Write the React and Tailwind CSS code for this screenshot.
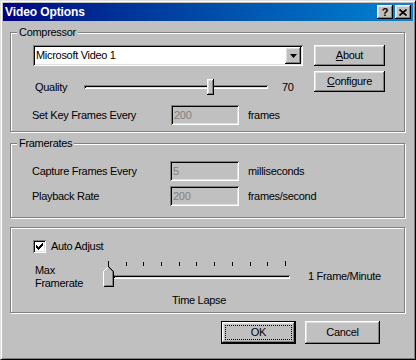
import React from "react";

const raised =
  "shadow-[inset_-1px_-1px_0_#000,inset_1px_1px_0_#fff,inset_-2px_-2px_0_#808080,inset_2px_2px_0_#dfdfdf]";
const sunken =
  "shadow-[inset_1px_1px_0_#808080,inset_-1px_-1px_0_#fff,inset_2px_2px_0_#000,inset_-2px_-2px_0_#dfdfdf]";

const GroupBox = ({ label, className, children }) => (
  <div
    className={`relative w-[395px] border border-[#808080] shadow-[inset_1px_1px_0_#fff,1px_1px_0_#fff] ${className}`}
  >
    {label && (
      <span className="absolute left-[6px] top-[-7px] bg-[#c0c0c0] px-[2px] leading-[13px]">
        {label}
      </span>
    )}
    {children}
  </div>
);

const Field = ({ value, className }) => (
  <div
    className={`flex h-[20px] items-center bg-[#c0c0c0] pl-[3px] text-[#808080] ${sunken} ${className}`}
  >
    {value}
  </div>
);

const Thumb = () => (
  <svg width="11" height="21" viewBox="0 0 11 21" shapeRendering="crispEdges">
    <polygon points="5.5,0.5 10.5,5.5 10.5,20.5 0.5,20.5 0.5,5.5" fill="#c0c0c0" />
    <polyline points="0.5,20 0.5,5.5 5.5,0.5" fill="none" stroke="#fff" />
    <polyline points="5.5,0.5 10.5,5.5 10.5,20.5 0.5,20.5" fill="none" stroke="#000" />
    <polyline points="5.5,1.5 9.5,5.5 9.5,19.5 1.5,19.5" fill="none" stroke="#808080" />
  </svg>
);

export default function App() {
  return (
    <div className="h-[360px] w-[416px] border border-t-[#dfdfdf] border-l-[#dfdfdf] border-r-black border-b-black bg-[#c0c0c0] p-[2px] font-['Liberation_Sans',Arial,sans-serif] text-[11px] leading-[13px] tracking-[-0.3px] text-black shadow-[inset_1px_1px_0_#fff,inset_-1px_-1px_0_#808080]">
      {/* title bar */}
      <div className="flex h-[18px] items-center bg-linear-to-r from-[#000080] to-[#1084d0] px-[2px]">
        <span className="flex-1 text-[12px] font-bold tracking-[-0.1px] text-white">Video Options</span>
        <button className={`flex h-[14px] w-[16px] items-center justify-center bg-[#c0c0c0] text-[11px] font-bold leading-none ${raised}`}>
          ?
        </button>
        <button className={`ml-[2px] flex h-[14px] w-[16px] items-center justify-center bg-[#c0c0c0] ${raised}`}>
          <svg width="8" height="7" viewBox="0 0 8 7">
            <path d="M0.5 0.5 L7.5 6.5 M7.5 0.5 L0.5 6.5" stroke="#000" strokeWidth="1.7" />
          </svg>
        </button>
      </div>

      <div className="flex flex-col pl-[7px]">
        {/* Compressor */}
        <GroupBox label="Compressor" className="mt-[11px] flex h-[100px] pl-[21px] pt-[12px]">
          <div className="flex w-[271px] flex-col">
            <div className={`ml-[1px] flex h-[21px] w-[270px] bg-white p-[2px] ${sunken}`}>
              <span className="flex flex-1 items-center pl-[1px]">Microsoft Video 1</span>
              <div className={`flex w-[16px] items-center justify-center bg-[#c0c0c0] ${raised}`}>
                <svg width="7" height="4" viewBox="0 0 7 4">
                  <path d="M0 0 H7 L3.5 4 Z" fill="#000" />
                </svg>
              </div>
            </div>
            <div className="mt-[10px] flex h-[22px] items-center">
              <span className="ml-[3px] w-[49px]">Quality</span>
              <div className="relative h-full w-[184px]">
                <div className={`absolute left-0 top-[9px] h-[4px] w-full ${sunken}`} />
                <div className={`absolute left-[123px] top-[3px] h-[16px] w-[7px] bg-[#c0c0c0] ${raised}`} />
              </div>
              <span className="ml-[14px]">70</span>
            </div>
            <div className="mt-[7px] flex h-[20px] items-center">
              <span className="w-[139px]">Set Key Frames Every</span>
              <Field value="200" className="w-[68px]" />
              <span className="ml-[9px]">frames</span>
            </div>
          </div>
          <div className="ml-[11px] flex flex-col">
            <button className={`flex h-[21px] w-[71px] items-center justify-center bg-[#c0c0c0] ${raised}`}>
              <span><u>A</u>bout</span>
            </button>
            <button className={`mt-[5px] flex h-[21px] w-[71px] items-center justify-center bg-[#c0c0c0] ${raised}`}>
              <span><u>C</u>onfigure</span>
            </button>
          </div>
        </GroupBox>

        {/* Framerates */}
        <GroupBox label="Framerates" className="mt-[11px] h-[75px] pl-[21px] pt-[17px]">
          <div className="flex h-[20px] items-center">
            <span className="w-[138px]">Capture Frames Every</span>
            <Field value="5" className="w-[69px]" />
            <span className="ml-[9px]">milliseconds</span>
          </div>
          <div className="mt-[5px] flex h-[20px] items-center">
            <span className="w-[138px]">Playback Rate</span>
            <Field value="200" className="w-[69px]" />
            <span className="ml-[9px]">frames/second</span>
          </div>
        </GroupBox>

        {/* Auto adjust */}
        <GroupBox className="mt-[9px] h-[86px] pl-[22px] pt-[12px]">
          <div className="flex h-[13px] items-center">
            <div className={`flex h-[13px] w-[13px] items-center justify-center bg-white ${sunken}`}>
              <svg width="7" height="7" viewBox="0 0 7 7" shapeRendering="crispEdges">
                <path d="M0 2h1v3h-1zM1 3h1v3h-1zM2 4h1v3h-1zM3 3h1v3h-1zM4 2h1v3h-1zM5 1h1v3h-1zM6 0h1v3h-1z" fill="#000" />
              </svg>
            </div>
            <span className="ml-[5px]">Auto Adjust</span>
          </div>
          <div className="mt-[5px] flex h-[30px] items-start">
            <div className="ml-[2px] mt-[6px] w-[68px]">
              <div>Max</div>
              <div>Framerate</div>
            </div>
            <div className="relative h-[30px] w-[190px]">
              <div className="absolute left-[5px] top-[3px] flex h-[5px] w-[178px] items-end justify-between">
                <span className="h-[5px] w-[1px] bg-black" />
                <span className="h-[4px] w-[1px] bg-black" />
                <span className="h-[4px] w-[1px] bg-black" />
                <span className="h-[4px] w-[1px] bg-black" />
                <span className="h-[4px] w-[1px] bg-black" />
                <span className="h-[4px] w-[1px] bg-black" />
                <span className="h-[4px] w-[1px] bg-black" />
                <span className="h-[4px] w-[1px] bg-black" />
                <span className="h-[4px] w-[1px] bg-black" />
                <span className="h-[4px] w-[1px] bg-black" />
                <span className="h-[5px] w-[1px] bg-black" />
              </div>
              <div className={`absolute left-[10px] top-[17px] h-[4px] w-[177px] ${sunken}`} />
              <div className="absolute left-0 top-[8px] flex">
                <Thumb />
              </div>
            </div>
            <span className="ml-[15px] mt-[12px]">1 Frame/Minute</span>
          </div>
          <div className="ml-[139px] mt-[6px]">Time Lapse</div>
        </GroupBox>

        {/* buttons */}
        <div className="mt-[8px] flex">
          <button className={`relative ml-[211px] flex h-[23px] w-[75px] items-center justify-center border border-black bg-[#c0c0c0] ${raised}`}>
            <span className="absolute inset-[3px] border border-dotted border-black" />
            <span>OK</span>
          </button>
          <button className={`ml-[9px] flex h-[23px] w-[75px] items-center justify-center bg-[#c0c0c0] ${raised}`}>
            Cancel
          </button>
        </div>
      </div>
    </div>
  );
}
